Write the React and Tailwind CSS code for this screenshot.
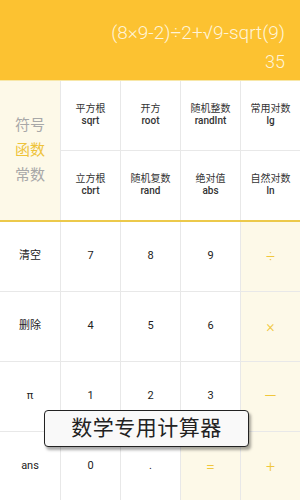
import React from 'react';

const font = { fontFamily: 'Roboto, "Noto Sans CJK SC", sans-serif' };

const funcs = [
  { zh: '平方根', en: 'sqrt' },
  { zh: '开方', en: 'root' },
  { zh: '随机整数', en: 'randInt' },
  { zh: '常用对数', en: 'lg' },
  { zh: '立方根', en: 'cbrt' },
  { zh: '随机复数', en: 'rand' },
  { zh: '绝对值', en: 'abs' },
  { zh: '自然对数', en: 'ln' },
];

const keys = [
  ['清空', '7', '8', '9', '÷'],
  ['删除', '4', '5', '6', '×'],
  ['π', '1', '2', '3', '—'],
  ['ans', '0', '.', '=', '+'],
];

const isOp = (k) => ['÷', '×', '—', '+', '='].includes(k);

export default function App() {
  return (
    <div className="relative w-[300px] h-[500px] overflow-hidden bg-white" style={font}>
      {/* 显示区 */}
      <div className="h-[80px] bg-[#fcc231] flex flex-col items-end justify-end px-[15px] pb-[7px] text-[#fff4d8]">
        <div className="text-[19px] leading-[24px] font-light">(8×9-2)÷2+√9-sqrt(9)</div>
        <div className="text-[18px] leading-[22px] mt-[6px] font-light">35</div>
      </div>

      {/* 函数区 */}
      <div className="flex h-[142px] border-t border-[#f7e7a8] border-b-2 border-b-[#ecc94b]">
        <div className="w-[60px] bg-[#fdf9e8] flex flex-col items-center justify-center gap-[4px] text-[15px] leading-[21px]">
          <span className="text-[#a8a8a8]">符号</span>
          <span className="text-[#eec33a]">函数</span>
          <span className="text-[#a8a8a8]">常数</span>
        </div>
        <div className="flex-1 grid grid-cols-4 grid-rows-2">
          {funcs.map((f, i) => (
            <div
              key={f.en}
              className={`flex flex-col items-center justify-center border-l border-[#e8e8e8] text-[10px] leading-[12px] text-[#333] ${
                i < 4 ? 'border-b' : ''
              }`}
            >
              <span>{f.zh}</span>
              <span className="font-medium">{f.en}</span>
            </div>
          ))}
        </div>
      </div>

      {/* 键盘区 */}
      <div className="grid grid-cols-5">
        {keys.flat().map((k, i) => {
          const col = i % 5;
          const cream = col === 4 || k === '=';
          return (
            <div
              key={i}
              className={`h-[70px] flex items-center justify-center border-b border-[#e8e8e8] ${
                col > 0 ? 'border-l' : ''
              } ${cream ? 'bg-[#fdf9e8]' : 'bg-white'} ${
                isOp(k) ? 'text-[#f0c73c] text-[16px] font-light' : 'text-[#222] text-[11px]'
              }`}
            >
              {k}
            </div>
          );
        })}
      </div>

      {/* 提示浮层 */}
      <div className="absolute left-[44px] top-[410px] w-[205px] h-[37px] flex items-center justify-center rounded-[4px] border-[1.5px] border-[#222] bg-[#f9f9f9] shadow-[2px_3px_3px_rgba(0,0,0,0.35)]">
        <span className="text-[21px] leading-none tracking-[0.5px] text-[#222]">数学专用计算器</span>
      </div>
    </div>
  );
}
